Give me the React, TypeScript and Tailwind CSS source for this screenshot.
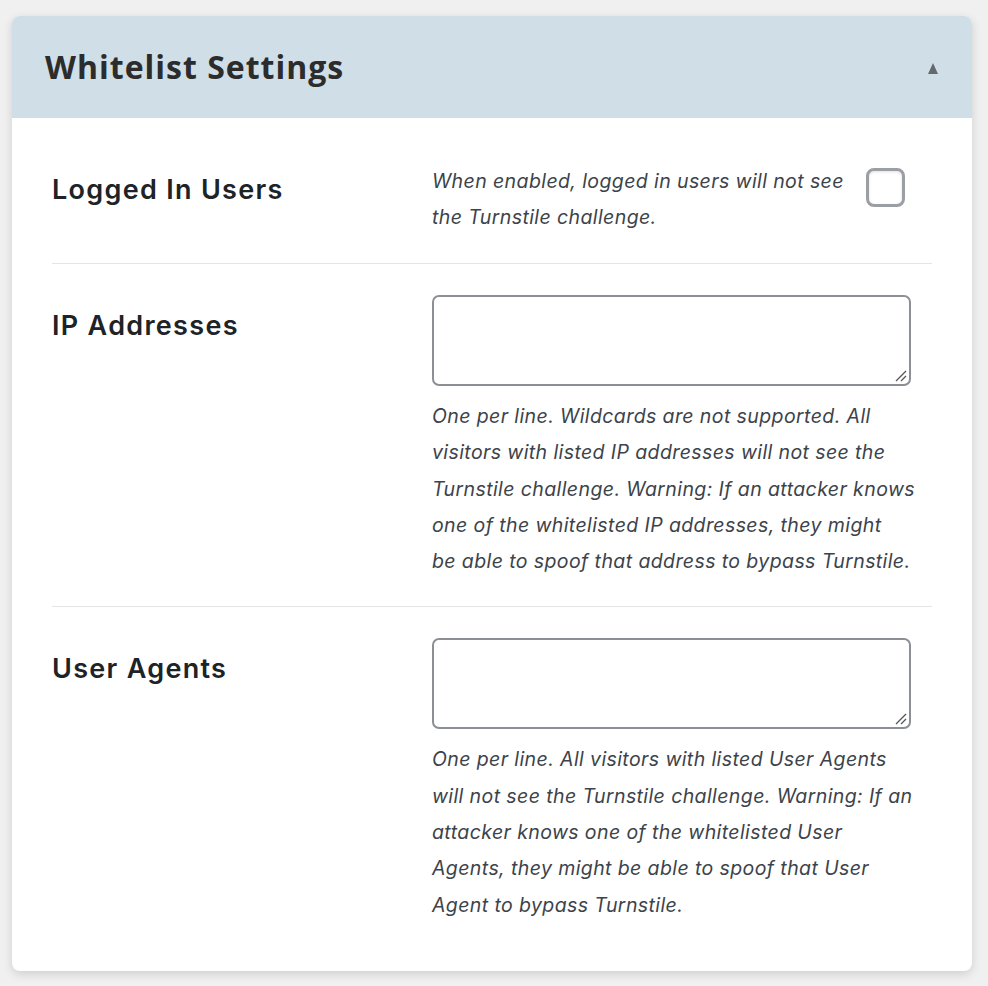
const rows = [
  {
    label: "IP Addresses",
    help: [
      "One per line. Wildcards are not supported. All",
      "visitors with listed IP addresses will not see the",
      "Turnstile challenge. Warning: If an attacker knows",
      "one of the whitelisted IP addresses, they might",
      "be able to spoof that address to bypass Turnstile.",
    ],
  },
  {
    label: "User Agents",
    help: [
      "One per line. All visitors with listed User Agents",
      "will not see the Turnstile challenge. Warning: If an",
      "attacker knows one of the whitelisted User",
      "Agents, they might be able to spoof that User",
      "Agent to bypass Turnstile.",
    ],
  },
];

const sans = { fontFamily: "Inter, 'Noto Sans', sans-serif" };

export default function App() {
  return (
    <div className="min-h-[986px] bg-[#f0f0f1] pl-[12px] pr-[16px] pt-[16px] pb-[16px]" style={sans}>
      <div className="rounded-[8px] bg-white shadow-[0_3px_10px_rgba(0,0,0,0.14)] overflow-hidden">
        {/* header */}
        <div className="flex items-center justify-between h-[102px] bg-[#d0dee7] pl-[33px] pr-[34px]">
          <h2
            className="text-[32px] font-bold text-[#2c2c2c] tracking-[1px]"
            style={{ fontFamily: "'Open Sans', Inter, sans-serif" }}
          >
            Whitelist Settings
          </h2>
          <svg width="10" height="11" viewBox="0 0 10 11" className="mt-[2px]">
            <path d="M5 0 L10 11 L0 11 Z" fill="#646970" />
          </svg>
        </div>

        <div className="px-[40px]">
          {/* logged in users */}
          <div className="grid grid-cols-[380px_1fr] pt-[45px] pb-[28px] border-b border-[#e5e5e5]">
            <div className="text-[27px] font-semibold text-[#1d2327] leading-[36px] pt-[9px] tracking-[1.3px]">
              Logged In Users
            </div>
            <div className="flex items-start justify-between">
              <p className="text-[19.5px] italic text-[#3c434a] leading-[36px] tracking-[0.4px]">
                <span className="block whitespace-nowrap">When enabled, logged in users will not see</span>
                <span className="block whitespace-nowrap">the Turnstile challenge.</span>
              </p>
              <div className="mt-[5px] mr-[27px] w-[39px] h-[39px] rounded-[8px] border-[3px] border-[#9b9ea2] bg-white shadow-[inset_0_1px_3px_rgba(0,0,0,0.12)]" />
            </div>
          </div>

          {rows.map((r, i) => (
            <div
              key={r.label}
              className={`grid grid-cols-[380px_1fr] pt-[31px] ${i === 0 ? "pb-[27px] border-b border-[#e5e5e5]" : "pb-[48px]"}`}
            >
              <div className="text-[27px] font-semibold text-[#1d2327] leading-[36px] pt-[13px] tracking-[1.3px]">
                {r.label}
              </div>
              <div className="w-[479px]">
                <div className="relative h-[91px] rounded-[7px] border-2 border-[#8c8f94] bg-white">
                  <svg width="12" height="12" viewBox="0 0 12 12" className="absolute right-[2px] bottom-[2px]">
                    <path d="M1 11 L11 1 M6 11 L11 6" stroke="#555" strokeWidth="1.3" />
                  </svg>
                </div>
                <p className="mt-[12px] text-[19.5px] italic text-[#3c434a] leading-[36.3px] tracking-[0.4px]">
                  {r.help.map((line) => (
                    <span key={line} className="block whitespace-nowrap">
                      {line}
                    </span>
                  ))}
                </p>
              </div>
            </div>
          ))}
        </div>
      </div>
    </div>
  );
}
